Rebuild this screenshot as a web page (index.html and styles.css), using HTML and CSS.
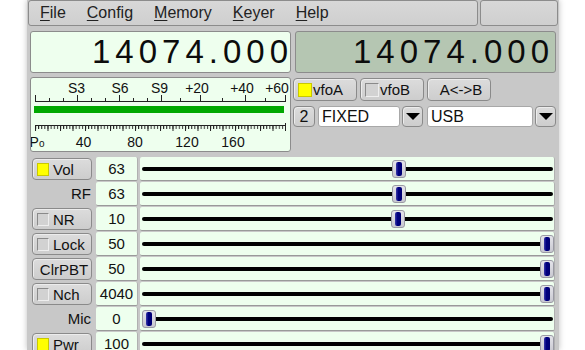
FILE: index.html
```html
<!DOCTYPE html>
<html lang="en">
<head>
  <meta charset="UTF-8" />
  <title>Rig Control</title>
  <link rel="stylesheet" href="styles.css">
</head>
<body>

<div class="window">
  <div class="menu-row">
    <div class="menubar">
      <span class="menu-item"><u>F</u>ile</span>
      <span class="menu-item"><u>C</u>onfig</span>
      <span class="menu-item"><u>M</u>emory</span>
      <span class="menu-item"><u>K</u>eyer</span>
      <span class="menu-item"><u>H</u>elp</span>
    </div>
    <div class="menubar-extra"></div>
  </div>

  <div class="freq-row">
    <div class="freq freq-a"><span>14074.000</span></div>
    <div class="freq freq-b"><span>14074.000</span></div>
  </div>

  <div class="meter-row">
    <div class="meter">
      <svg width="259" height="73" viewBox="0 0 259 73">
        <defs>
          <pattern id="fine" x="4" y="0" width="3.125" height="73" patternUnits="userSpaceOnUse">
            <rect x="0" y="0" width="1" height="73" fill="#222"/>
          </pattern>
          <pattern id="coarse" x="4" y="0" width="12.5" height="73" patternUnits="userSpaceOnUse">
            <rect x="0" y="0" width="1" height="73" fill="#222"/>
          </pattern>
        </defs>
        <g class="scale-text">
          <text x="45.5" y="15">S3</text>
          <text x="89" y="15">S6</text>
          <text x="128.5" y="15">S9</text>
          <text x="166" y="15">+20</text>
          <text x="211" y="15">+40</text>
          <text x="246" y="15">+60</text>
        </g>
        <path d="M4 23.5H255" stroke="#222" stroke-width="1"/>
        <path d="M4.5 17V24M46.5 17V24M88.5 17V24M130.5 17V24M169.5 17V24M214.5 17V24M254.5 17V24" stroke="#222" stroke-width="1"/>
        <path d="M18.5 20V24M32.5 20V24M60.5 20V24M74.5 20V24M102.5 20V24M116.5 20V24M149.5 20V24M191.5 20V24M234.5 20V24" stroke="#222" stroke-width="1"/>
        <rect x="3" y="28" width="250" height="7" fill="#00a800"/>
        <path d="M4 47.5H255" stroke="#222" stroke-width="1"/>
        <rect x="4" y="48" width="251" height="3" fill="url(#fine)"/>
        <rect x="4" y="48" width="251" height="5" fill="url(#coarse)"/>
        <path d="M254.5 45V53" stroke="#222" stroke-width="1"/>
        <g class="scale-text">
          <text x="6" y="69" text-anchor="start">P<tspan font-size="10">o</tspan></text>
          <text x="52.5" y="69">40</text>
          <text x="104" y="69">80</text>
          <text x="156" y="69">120</text>
          <text x="202" y="69">160</text>
        </g>
      </svg>
    </div>

    <div class="vfo-panel">
      <div class="vfo-buttons">
        <button class="btn vfo-btn"><span class="ind on"></span>vfoA</button>
        <button class="btn vfo-btn"><span class="ind"></span>vfoB</button>
        <button class="btn vfo-btn center">A&lt;-&gt;B</button>
      </div>
      <div class="mode-row">
        <button class="btn num-btn">2</button>
        <div class="choice fixed">FIXED</div>
        <button class="btn drop"><span class="arrow"></span></button>
        <div class="choice usb">USB</div>
        <button class="btn drop"><span class="arrow"></span></button>
      </div>
    </div>
  </div>

  <div class="controls">
    <div class="ctrl-row">
      <button class="btn ctrl-btn"><span class="ind on"></span>Vol</button>
      <div class="value">63</div>
      <div class="slider"><div class="track"></div><div class="thumb" style="left:252px"></div></div>
    </div>
    <div class="ctrl-row">
      <div class="ctrl-label">RF</div>
      <div class="value">63</div>
      <div class="slider"><div class="track"></div><div class="thumb" style="left:252px"></div></div>
    </div>
    <div class="ctrl-row">
      <button class="btn ctrl-btn"><span class="ind"></span>NR</button>
      <div class="value">10</div>
      <div class="slider"><div class="track"></div><div class="thumb" style="left:251px"></div></div>
    </div>
    <div class="ctrl-row">
      <button class="btn ctrl-btn"><span class="ind"></span>Lock</button>
      <div class="value">50</div>
      <div class="slider"><div class="track"></div><div class="thumb" style="left:400px"></div></div>
    </div>
    <div class="ctrl-row">
      <button class="btn ctrl-btn center">ClrPBT</button>
      <div class="value">50</div>
      <div class="slider"><div class="track"></div><div class="thumb" style="left:400px"></div></div>
    </div>
    <div class="ctrl-row">
      <button class="btn ctrl-btn"><span class="ind"></span>Nch</button>
      <div class="value">4040</div>
      <div class="slider"><div class="track"></div><div class="thumb" style="left:400px"></div></div>
    </div>
    <div class="ctrl-row">
      <div class="ctrl-label">Mic</div>
      <div class="value">0</div>
      <div class="slider"><div class="track"></div><div class="thumb" style="left:2px"></div></div>
    </div>
    <div class="ctrl-row">
      <button class="btn ctrl-btn"><span class="ind on"></span>Pwr</button>
      <div class="value">100</div>
      <div class="slider"><div class="track"></div><div class="thumb" style="left:400px"></div></div>
    </div>
  </div>
</div>

</body>
</html>
```

FILE: styles.css
```css
* { box-sizing: border-box; }
body {
  margin: 0;
  background: #fff;
  font-family: 'Liberation Sans', Arial, sans-serif;
  color: #111;
  overflow: hidden;
}
.window {
  margin-left: 27px;
  width: 532px;
  height: 350px;
  background: #c8c8c8;
  box-shadow: 0 0 6px rgba(0, 0, 0, 0.25);
  overflow: hidden;
}

/* menu */
.menu-row {
  display: flex;
  gap: 2px;
  padding-left: 1px;
  height: 26px;
}
.menubar, .menubar-extra {
  height: 26px;
  background: linear-gradient(#d8d8d8, #cfcfcf);
  border: 1px solid #8c8c8c;
  border-radius: 3px;
}
.menubar {
  width: 450px;
  display: flex;
  align-items: center;
  gap: 21px;
  padding-left: 11px;
  font-size: 16px;
  color: #222;
}
.menubar-extra { width: 78px; }
.menu-item u { text-decoration-thickness: 1px; text-underline-offset: 2px; }

/* frequency */
.freq-row {
  display: flex;
  gap: 4px;
  margin-top: 5px;
  padding-left: 3px;
}
.freq {
  width: 261px;
  height: 42px;
  border: 1px solid #8c8c8c;
  border-radius: 3px;
  display: flex;
  align-items: center;
  justify-content: flex-end;
  font-size: 33px;
  letter-spacing: 5px;
  color: #0c0c0c;
}
.freq span { margin-right: -3px; }
.freq-a { background: #eeffee; }
.freq-b { background: #b5c6b2; }
.freq-b span { margin-right: 1px; }

/* meter + vfo */
.meter-row {
  display: flex;
  gap: 2px;
  margin-top: 4px;
  padding-left: 3px;
}
.meter {
  width: 261px;
  height: 75px;
  background: #eeffee;
  border: 1px solid #8c8c8c;
  border-radius: 3px;
}
.meter svg { display: block; }
.scale-text text {
  font-family: 'Liberation Sans', Arial, sans-serif;
  font-size: 14px;
  fill: #111;
  text-anchor: middle;
}
.vfo-panel {
  margin-top: 1px;
  display: flex;
  flex-direction: column;
  gap: 5px;
}
.vfo-buttons, .mode-row {
  display: flex;
}
.vfo-buttons { gap: 3px; }

.btn {
  font-family: inherit;
  font-size: 15px;
  color: #111;
  background: linear-gradient(#dcdcdc, #cdcdcd);
  border: 1px solid #8a8a8a;
  border-radius: 4px;
  box-shadow: inset 1px 1px 0 #ececec;
  padding: 0;
  margin: 0;
  display: flex;
  align-items: center;
}
.btn.center { justify-content: center; }
.ind {
  display: inline-block;
  background: #d2d2d2;
  border-top: 1px solid #8a8a8a;
  border-left: 1px solid #8a8a8a;
  border-bottom: 1px solid #eee;
  border-right: 1px solid #eee;
}
.ind.on {
  background: #ffff00;
  border-color: #c8c800;
}
.vfo-btn {
  width: 64px;
  height: 23px;
  padding-left: 4px;
}
.vfo-btn .ind {
  width: 14px;
  height: 14px;
  margin-right: 1px;
}
.mode-row { gap: 2px; }
.num-btn {
  width: 22px;
  height: 21px;
  font-size: 16px;
  justify-content: center;
  margin-right: 1px;
}
.choice {
  height: 21px;
  background: #fff;
  border: 1px solid #a8a8a8;
  border-radius: 3px;
  font-size: 16px;
  line-height: 19px;
  padding-left: 3px;
  color: #111;
}
.fixed { width: 82px; }
.usb { width: 106px; margin-left: 2px; }
.drop {
  width: 21px;
  height: 21px;
  justify-content: center;
}
.arrow {
  width: 0;
  height: 0;
  border-left: 7px solid transparent;
  border-right: 7px solid transparent;
  border-top: 7px solid #000;
}

/* control rows */
.controls {
  margin-top: 5px;
  padding-left: 5px;
  display: flex;
  flex-direction: column;
  gap: 1px;
}
.ctrl-row {
  display: flex;
  align-items: center;
  height: 24px;
}
.ctrl-btn, .ctrl-label {
  width: 60px;
  height: 22px;
}
.ctrl-btn { padding-left: 4px; }
.ctrl-btn .ind {
  width: 12px;
  height: 13px;
  margin-right: 4px;
}
.ctrl-label {
  font-size: 15px;
  line-height: 22px;
  text-align: right;
  padding-right: 1px;
}
.value {
  width: 42px;
  height: 24px;
  margin-left: 4px;
  background: #eeffee;
  border-bottom: 1px solid #9a9a9a;
  border-right: 1px solid #b0b0b0;
  border-radius: 2px;
  font-size: 15px;
  line-height: 23px;
  text-align: center;
}
.slider {
  position: relative;
  width: 415px;
  height: 24px;
  margin-left: 2px;
  background: #eeffee;
  border-bottom: 1px solid #9a9a9a;
  border-right: 1px solid #b0b0b0;
  border-radius: 2px;
  display: flex;
  align-items: center;
  padding: 0 1px 0 2px;
}
.track {
  flex: 1;
  height: 4px;
  background: #000;
  border-radius: 2px;
}
.thumb {
  position: absolute;
  top: 3px;
  width: 14px;
  height: 18px;
  background: linear-gradient(#e4e4ea, #c8c8d0);
  border: 1px solid #9a9aa4;
  border-radius: 3px;
}
.thumb::after {
  content: "";
  position: absolute;
  left: 3px;
  top: 1px;
  width: 6px;
  height: 14px;
  background: linear-gradient(90deg, #3a3aa8, #000080 40%, #000070);
  border-radius: 2px;
}
```
